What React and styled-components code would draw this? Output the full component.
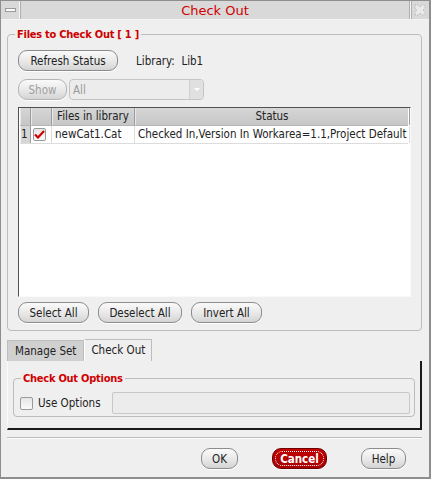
import React from "react";
import styled, { createGlobalStyle, css } from "styled-components";

const GlobalStyle = createGlobalStyle`
  html, body {
    margin: 0;
    padding: 0;
    background: #efefef;
  }
  * { box-sizing: border-box; }
`;

const font = `"DejaVu Sans Condensed", "DejaVu Sans", sans-serif`;

const Window = styled.div`
  width: 431px;
  height: 479px;
  background: #efefef;
  border: 1px solid #8e8e8e;
  border-right: 2px solid #8e8e8e;
  border-bottom: 2px solid #8e8e8e;
  font-family: ${font};
  font-size: 11.5px;
  color: #222;
  display: flex;
  flex-direction: column;
`;

const TitleBar = styled.div`
  height: 19px;
  display: flex;
  background: #d9d9d9;
  border-bottom: 1px solid #f4f4f4;
`;

const TitleBtn = styled.div`
  width: 19px;
  display: flex;
  align-items: center;
  justify-content: center;
  border-left: ${(p) => (p.right ? "1px solid #f4f4f4" : "none")};
  border-right: ${(p) => (p.right ? "none" : "1px solid #f4f4f4")};
  box-shadow: ${(p) => (p.right ? "inset 1px 0 0 #b0b0b0" : "1px 0 0 #b0b0b0")};
`;

const TitleText = styled.div`
  flex: 1;
  text-align: center;
  color: #d10000;
  font-family: "DejaVu Sans", sans-serif;
  font-size: 13px;
  line-height: 19px;
  border-left: 1px solid #b0b0b0;
  border-right: 1px solid #b0b0b0;
`;

const Body = styled.div`
  flex: 1;
  display: flex;
  flex-direction: column;
  padding: 8px 7px 0 6px;
`;

const Group = styled.fieldset`
  margin: 0;
  padding: ${(p) => p.pad || "0 10px 7px 10px"};
  border: 1px solid #bcbcbc;
  border-radius: 4px;
  min-width: 0;
`;

const Legend = styled.legend`
  color: #d00000;
  font-weight: bold;
  font-size: 11px;
  letter-spacing: -0.25px;
  padding: 0 2px;
  margin-left: ${(p) => p.ml ?? -3}px;
`;

const Row = styled.div`
  display: flex;
  align-items: center;
  gap: ${(p) => p.gap || 0}px;
  margin-top: ${(p) => p.mt || 0}px;
`;

const Button = styled.button`
  font-family: ${font};
  font-size: 11.5px;
  height: 21px;
  width: ${(p) => p.w}px;
  padding: 0;
  border: 1px solid ${(p) => (p.disabled ? "#b4b4b4" : "#8c8c8c")};
  border-radius: 9px;
  color: ${(p) => (p.disabled ? "#a0a0a0" : "#222")};
  background: linear-gradient(#fafafa, #e6e6e6 60%, #d4d4d4);
  box-shadow: 0 1px 0 #fff;
  ${(p) =>
    p.danger &&
    css`
      background: linear-gradient(#c40000, #a80000);
      border-color: #6e0000;
      color: #fff;
      font-weight: bold;
      position: relative;
      &::after {
        content: "";
        position: absolute;
        inset: 2px;
        border: 1px dotted #fff;
        border-radius: 7px;
      }
    `}
`;

const Label = styled.span`
  margin-left: ${(p) => p.ml || 0}px;
  white-space: pre;
`;

const Combo = styled.div`
  width: 135px;
  height: 21px;
  border: 1px solid #c4c4c4;
  border-radius: 4px;
  background: #ececec;
  color: #9a9a9a;
  display: flex;
  align-items: center;
  padding-left: 3px;
  justify-content: space-between;
`;

const ComboArrow = styled.div`
  width: 14px;
  height: 100%;
  border-left: 1px solid #d0d0d0;
  display: flex;
  align-items: center;
  justify-content: center;
  background: #e0e0e0;
  border-radius: 0 3px 3px 0;
`;

const Table = styled.div`
  margin-top: 7px;
  height: 190px;
  border-top: 1px solid #505050;
  border-left: 1px solid #505050;
  border-right: 1px solid #fafafa;
  border-bottom: 1px solid #fafafa;
  background: #fff;
  display: flex;
  flex-direction: column;
  padding: 0 2px 0 1px;
`;

const cols = "11px 21px 83px 275px";

const HeadRow = styled.div`
  display: grid;
  grid-template-columns: ${cols};
  height: 18px;
  background: linear-gradient(#d6d6d6, #c6c6c6);
  border-bottom: 1px solid #b6b6b6;
`;

const HeadCell = styled.div`
  text-align: center;
  line-height: 17px;
  border-right: 1px solid #9c9c9c;
  box-shadow: inset 1px 0 0 #e8e8e8;
`;

const DataRow = styled.div`
  display: grid;
  grid-template-columns: ${cols};
  height: 18px;
  border-bottom: 1px solid #dcdcdc;
`;

const Cell = styled.div`
  line-height: 17px;
  padding-left: ${(p) => (p.pl ?? 3)}px;
  border-right: 1px solid #dcdcdc;
  white-space: nowrap;
  overflow: hidden;
  display: flex;
  align-items: center;
  ${(p) =>
    p.rowhead &&
    css`
      background: #d6d6d6;
      border-right: 1px solid #9c9c9c;
      box-shadow: inset 1px 0 0 #f0f0f0;
      padding-left: 1px;
    `}
`;

const CheckBox = styled.div`
  width: 13px;
  height: 13px;
  flex: none;
  border: 1px solid #9a9a9a;
  border-radius: 2px;
  background: linear-gradient(#e6e6e6, #fafafa);
  display: flex;
  align-items: center;
  justify-content: center;
  margin-left: ${(p) => p.ml || 0}px;
`;

const Tabs = styled.div`
  display: flex;
  align-items: flex-end;
  margin-top: 8px;
  height: 22px;
`;

const Tab = styled.div`
  height: ${(p) => (p.active ? 22 : 21)}px;
  padding: 0 ${(p) => (p.active ? 6 : 7)}px;
  line-height: 21px;
  background: ${(p) => (p.active ? "#efefef" : "#d0d0d0")};
  border: 1px solid #bdbdbd;
  border-bottom: none;
  border-left: ${(p) => (p.active ? "1px solid #fff" : "1px solid #bdbdbd")};
`;

const Panel = styled.div`
  height: 69px;
  border-left: 1px solid #fafafa;
  border-right: 2px solid #1a1a1a;
  border-bottom: 2px solid #1a1a1a;
  padding: 11px 5px 0 5px;
`;

const TextField = styled.div`
  flex: 1;
  height: 22px;
  border: 1px solid #c8c8c8;
  border-radius: 2px;
  background: #ececec;
  margin-left: 11px;
`;

const Separator = styled.div`
  margin-top: 7px;
  height: 2px;
  border-top: 1px solid #bcbcbc;
  border-bottom: 1px solid #fafafa;
`;

const Footer = styled.div`
  display: flex;
  justify-content: flex-end;
  gap: 34px;
  padding: 9px 16px 0 0;
`;

const Check = () => (
  <svg width="11" height="9" viewBox="0 0 11 9">
    <path d="M1 4.5 L4 7.5 L10 1" fill="none" stroke="#d00000" strokeWidth="2.2" />
  </svg>
);

export default function App() {
  return (
    <>
      <GlobalStyle />
      <Window>
        <TitleBar>
          <TitleBtn>
            <svg width="11" height="4" viewBox="0 0 11 4">
              <rect x="0.5" y="0.5" width="10" height="3" fill="#fafafa" stroke="#9a9a9a" />
            </svg>
          </TitleBtn>
          <TitleText>Check Out</TitleText>
          <TitleBtn right>
            <svg width="12" height="12" viewBox="0 0 12 12">
              <path
                d="M1 1 L4 1 L6 3 L8 1 L11 1 L11 4 L9 6 L11 8 L11 11 L8 11 L6 9 L4 11 L1 11 L1 8 L3 6 L1 4 Z"
                fill="#eaeaea"
                stroke="#b4b4b4"
                strokeDasharray="1 1"
              />
            </svg>
          </TitleBtn>
        </TitleBar>
        <Body>
          <Group>
            <Legend>Files to Check Out [ 1 ]</Legend>
            <Row mt={9}>
              <Button w={100}>Refresh Status</Button>
              <Label ml={18}>Library:  Lib1</Label>
            </Row>
            <Row mt={8} gap={2}>
              <Button w={49} disabled>Show</Button>
              <Combo>
                All
                <ComboArrow>
                  <svg width="6" height="4" viewBox="0 0 6 4">
                    <path d="M0 0 L6 0 L3 3 Z" fill="#fff" />
                  </svg>
                </ComboArrow>
              </Combo>
            </Row>
            <Table>
              <HeadRow>
                <HeadCell />
                <HeadCell />
                <HeadCell>Files in library</HeadCell>
                <HeadCell>Status</HeadCell>
              </HeadRow>
              <DataRow>
                <Cell rowhead>1</Cell>
                <Cell pl={2}>
                  <CheckBox>
                    <Check />
                  </CheckBox>
                </Cell>
                <Cell>newCat1.Cat</Cell>
                <Cell>Checked In,Version In Workarea=1.1,Project Default</Cell>
              </DataRow>
            </Table>
            <Row mt={5} gap={9}>
              <Button w={71}>Select All</Button>
              <Button w={84}>Deselect All</Button>
              <Button w={71}>Invert All</Button>
            </Row>
          </Group>
          <Tabs>
            <Tab>Manage Set</Tab>
            <Tab active>Check Out</Tab>
          </Tabs>
          <Panel>
            <Group pad="7px 4px 2px 6px">
              <Legend ml={1}>Check Out Options</Legend>
              <Row>
                <CheckBox />
                <Label ml={5}>Use Options</Label>
                <TextField />
              </Row>
            </Group>
          </Panel>
          <Separator />
          <Footer>
            <Button w={37}>OK</Button>
            <Button w={55} danger>Cancel</Button>
            <Button w={45}>Help</Button>
          </Footer>
        </Body>
      </Window>
    </>
  );
}
